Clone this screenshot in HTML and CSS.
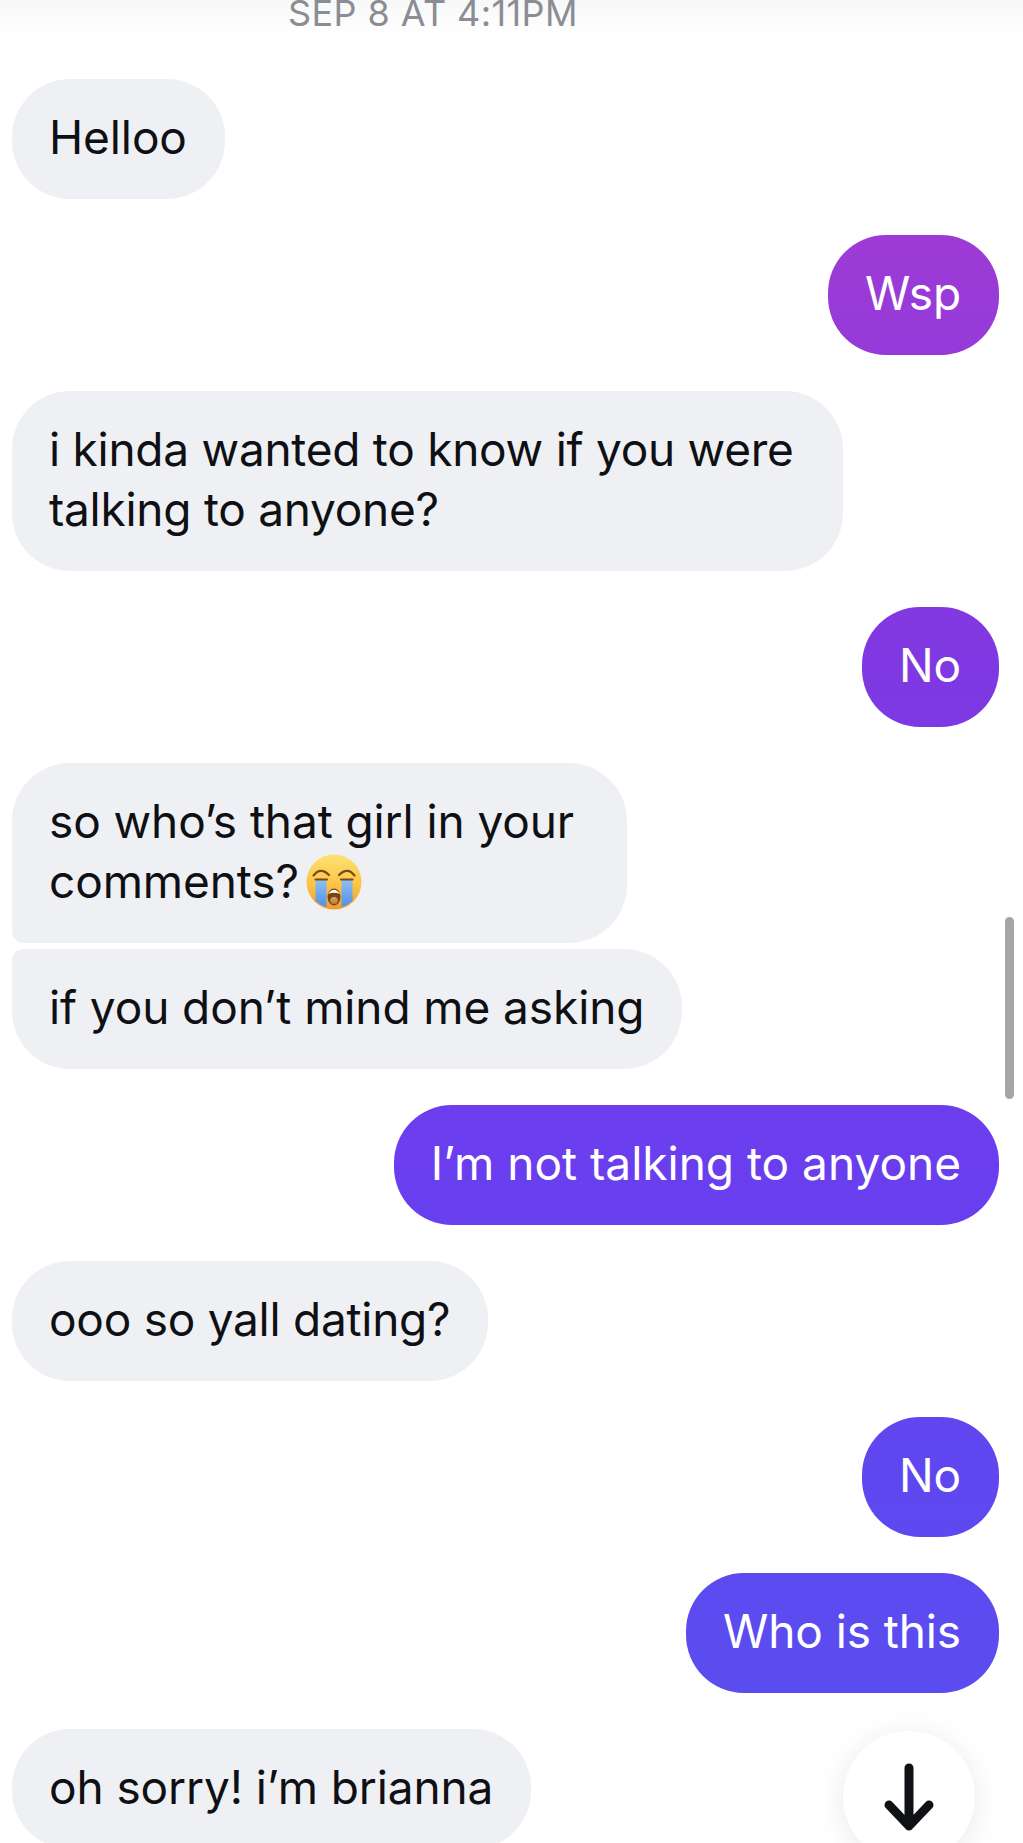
FILE: index.html
```html
<!DOCTYPE html>
<html lang="en">
<head>
<meta charset="utf-8">
<title>Messages</title>
<link rel="stylesheet" href="styles.css">
</head>
<body>
<main class="thread">
  <div class="top-fade"></div>
  <p class="stamp">SEP 8 AT 4:11PM</p>
  <div class="group in"><p class="bubble">Helloo</p></div>
  <div class="group out"><p class="bubble">Wsp</p></div>
  <div class="group in"><p class="bubble wrapped tight">i kinda wanted to know if you were<br>talking to anyone?</p></div>
  <div class="group out"><p class="bubble">No</p></div>
  <div class="group in">
    <p class="bubble wrapped first">so who’s that girl in your<br>comments?<svg class="emoji" viewBox="0 0 56 56" role="img" aria-label="loudly crying face">
      <defs>
        <linearGradient id="face" x1="0" y1="0" x2="0" y2="1"><stop offset="0" stop-color="#fde272"/><stop offset="0.55" stop-color="#fbc445"/><stop offset="1" stop-color="#f29a2a"/></linearGradient>
        <linearGradient id="tear" x1="0" y1="0" x2="0" y2="1"><stop offset="0" stop-color="#8fc0f0"/><stop offset="1" stop-color="#4f8fe6"/></linearGradient>
        <linearGradient id="tongue" x1="0" y1="0" x2="0" y2="1"><stop offset="0" stop-color="#d8a868"/><stop offset="1" stop-color="#b97a3a"/></linearGradient>
      </defs>
      <circle cx="28" cy="28" r="27.500" fill="url(#face)"/>
      <path d="M9.500 26 H20.500 V53 Q14 51 9.500 47Z" fill="url(#tear)"/>
      <path d="M46.500 26 H35.500 V53 Q42 51 46.500 47Z" fill="url(#tear)"/>
      <path d="M7.500 21.500 Q14.500 12.500 23 21" fill="none" stroke="#7a4a18" stroke-width="2.200" stroke-linecap="round"/>
      <path d="M33 21 Q41.500 12.500 48.500 21.500" fill="none" stroke="#7a4a18" stroke-width="2.200" stroke-linecap="round"/>
      <path d="M9.500 25.500 H21" stroke="#7a4a18" stroke-width="2.200" stroke-linecap="round"/>
      <path d="M35 25.500 H46.500" stroke="#7a4a18" stroke-width="2.200" stroke-linecap="round"/>
      <ellipse cx="28" cy="43" rx="6.500" ry="8.500" fill="#7a4412"/>
      <path d="M22 40 Q28 31.500 34 40 Q28 37.500 22 40Z" fill="#fff"/>
      <ellipse cx="28" cy="46.500" rx="3.800" ry="3.500" fill="url(#tongue)"/>
    </svg></p>
    <p class="bubble last">if you don’t mind me asking</p>
  </div>
  <div class="group out"><p class="bubble loose">I’m not talking to anyone</p></div>
  <div class="group in"><p class="bubble tight">ooo so yall dating?</p></div>
  <div class="group out"><p class="bubble">No</p></div>
  <div class="group out"><p class="bubble">Who is this</p></div>
  <div class="group in"><p class="bubble">oh sorry! i’m brianna</p></div>
  <div class="scrollbar"></div>
  <button class="jump" aria-label="Scroll to latest">
    <svg viewBox="0 0 64 80" width="64" height="80"><path d="M32 7 V65 M12 44 L32 65 L52 44" fill="none" stroke="#101114" stroke-width="9" stroke-linecap="round" stroke-linejoin="round"/></svg>
  </button>
</main>
</body>
</html>
```

FILE: styles.css
```css
* { box-sizing: border-box; }
html, body { margin: 0; height: 100%; background: #fff; }
body { overflow: hidden; }
.thread {
  position: relative;
  height: 1843px;
  overflow: hidden;
  padding: 0 24px 0 12px;
  display: flex;
  flex-direction: column;
  gap: 36px;
  font-family: Inter, "Noto Sans", sans-serif;
  font-size: 46px;
  line-height: 60px;
  letter-spacing: -0.1px;
  color: #0f1014;
}
.top-fade {
  position: absolute;
  inset: 0 0 auto 0;
  height: 36px;
  background: linear-gradient(#f8f8f9, rgba(255,255,255,0));
}
.stamp {
  position: relative;
  margin: -16px 0 1px 261px;
  height: 58px;
  line-height: 58px;
  font-size: 36px;
  letter-spacing: 0.4px;
  color: #8a8d94;
  width: 320px;
  text-align: center;
  white-space: nowrap;
  flex: none;
}
.group { display: flex; flex-direction: column; gap: 6px; flex: none; }
.group.in { align-items: flex-start; }
.group.out { align-items: flex-end; }
.bubble {
  margin: 0;
  padding: 28px 38px 32px 37px;
  border-radius: 58px;
  white-space: nowrap;
}
.bubble.wrapped { padding-right: 53px; }
.bubble.tight { letter-spacing: -0.26px; }
.bubble.wrapped.tight { padding-right: 49px; }
.bubble.loose { letter-spacing: 0; }
.in .bubble { background: #eff0f4; }
.out .bubble {
  color: #fff;
  background: linear-gradient(180deg, #9c3bd6 250px, #7f38e2 667px, #6a3eef 1165px, #5f47ef 1477px, #5b4cf0 1633px) fixed;
}
.bubble.first { border-bottom-left-radius: 12px; }
.bubble.last { border-top-left-radius: 12px; }
.emoji {
  width: 56px;
  height: 56px;
  margin-left: 7px;
  vertical-align: -12px;
}
.scrollbar {
  position: absolute;
  left: 1005px;
  top: 917px;
  width: 9px;
  height: 182px;
  border-radius: 5px;
  background: #a6a6a6;
}
.jump {
  position: absolute;
  left: 843px;
  top: 1731px;
  width: 132px;
  height: 132px;
  padding: 30px 0 0;
  border: 0;
  border-radius: 50%;
  background: #fff;
  box-shadow: 0 4px 30px rgba(0,0,0,.09);
  display: flex;
  justify-content: center;
  align-items: flex-start;
}
```
